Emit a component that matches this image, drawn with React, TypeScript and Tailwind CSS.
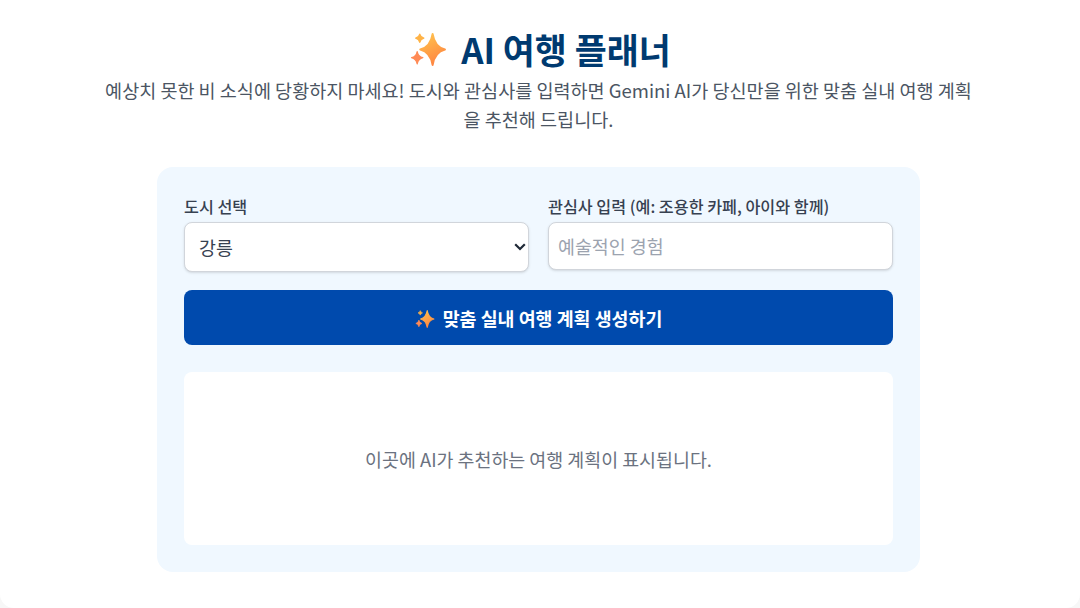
import React from "react";

function Sparkles({ size, id }: { size: number; id: string }) {
  return (
    <svg width={size} height={size} viewBox="0 0 36 36" className="shrink-0">
      <defs>
        <linearGradient id={id} x1="0.3" y1="0" x2="0.7" y2="1">
          <stop offset="0" stopColor="#ffc04d" />
          <stop offset="1" stopColor="#ff8240" />
        </linearGradient>
      </defs>
      <path
        d="M22 3Q24 15.500 34 18Q24 20.500 22 33Q20 20.500 10 18Q20 15.500 22 3Z"
        fill={`url(#${id})`}
        stroke={`url(#${id})`}
        strokeWidth="2"
        strokeLinejoin="round"
      />
      <path
        d="M9.500 3Q10.300 6.200 13.500 7Q10.300 7.800 9.500 11Q8.700 7.800 5.500 7Q8.700 6.200 9.500 3Z"
        fill="#ffb347"
        stroke="#ffb347"
        strokeWidth="1.200"
        strokeLinejoin="round"
      />
      <path
        d="M7 20Q8 25 12.500 26Q8 27 7 32Q6 27 1.500 26Q6 25 7 20Z"
        fill="#ff8a55"
        stroke="#ff8a55"
        strokeWidth="1.200"
        strokeLinejoin="round"
      />
    </svg>
  );
}

const font = "font-['Noto_Sans_CJK_KR','Noto_Sans',sans-serif]";

export default function App() {
  return (
    <div className="w-[1080px] h-[608px] bg-[#f7f7f7] overflow-hidden">
      <div className={`${font} h-[608px] w-[1080px] rounded-b-[14px] bg-white pr-[3px] flex flex-col items-center pt-[26px]`}>
        <h1 className="pl-[4px] flex items-center gap-[14px] text-[34.800px] leading-[46px] font-bold text-[#003a70]">
          <Sparkles size={37} id="a" />
          <span>AI 여행 플래너</span>
        </h1>
        <p className="mt-[3px] w-[870px] text-center text-[18.540px] leading-[29px] text-[#4b5563]">
          예상치 못한 비 소식에 당황하지 마세요! 도시와 관심사를 입력하면 Gemini AI가 당신만을 위한 맞춤 실내 여행 계획을 추천해 드립니다.
        </p>
        <div className="mt-[34px] w-[763px] h-[405px] rounded-2xl bg-[#f0f8ff] px-[27px] pt-[28px] pb-[27px] flex flex-col">
          <div className="grid grid-cols-2 gap-[19px]">
            <label className="flex flex-col">
              <span className="text-[16.200px] leading-[22px] font-medium text-[#374151] mb-[5px]">도시 선택</span>
              <span className="relative block">
                <select className="block appearance-none h-[50px] w-full rounded-lg border border-[#d1d5db] bg-white pl-[14px] pr-[24px] pt-[2px] text-[18.400px] text-[#374151] shadow-sm">
                  <option>강릉</option>
                </select>
                <svg width="12" height="8" viewBox="0 0 12 8" className="absolute right-[3px] top-[21px] pointer-events-none">
                  <path d="M1.200 1.200L6 6L10.800 1.200" fill="none" stroke="#1f2937" strokeWidth="2.200" />
                </svg>
              </span>
            </label>
            <label className="flex flex-col">
              <span className="text-[16.200px] leading-[22px] font-medium text-[#374151] mb-[5px]">관심사 입력 (예: 조용한 카페, 아이와 함께)</span>
              <input placeholder="예술적인 경험" className="h-[48px] w-full rounded-lg border border-[#d1d5db] bg-white px-[9px] text-[18.400px] text-[#1f2937] shadow-sm placeholder:text-[#9ca3af]" />
            </label>
          </div>
          <button className="mt-[18px] h-[55px] pt-[2px] w-full rounded-lg bg-[#004aad] flex items-center justify-center gap-[8px] text-[18.400px] font-bold text-white">
            <Sparkles size={20} id="b" />
            <span>맞춤 실내 여행 계획 생성하기</span>
          </button>
          <div className="mt-[27px] pt-[2px] flex-1 rounded-lg bg-white flex items-center justify-center text-[18.400px] text-[#6b7280]">
            이곳에 AI가 추천하는 여행 계획이 표시됩니다.
          </div>
        </div>
      </div>
    </div>
  );
}
